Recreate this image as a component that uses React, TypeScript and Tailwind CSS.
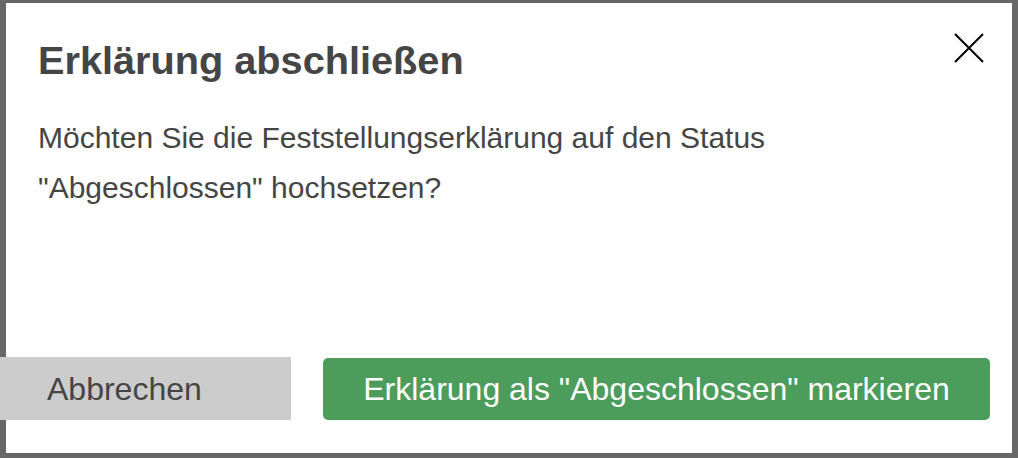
export default function App() {
  return (
    <div className="w-[1018px] h-[458px] bg-[#676767] pt-[3px] pl-[6px] pr-[6px] pb-[5px] overflow-hidden font-['Liberation_Sans',Arial,sans-serif]">
      <div className="bg-white h-full flex flex-col">
        <div className="flex items-start justify-between pl-[32px] pr-[28px] pt-[34px]">
          <h1 className="text-[39.7px] leading-[46px] font-bold text-[#454545]">
            Erklärung abschließen
          </h1>
          <button className="mt-[-4px] text-black">
            <svg width="30" height="30" viewBox="0 0 30 30" fill="none" stroke="currentColor" strokeWidth="2">
              <path d="M1 1L29 29M29 1L1 29" />
            </svg>
          </button>
        </div>
        <div className="pl-[32px] pt-[30px] text-[30px] leading-[50px] text-[#454545]">
          <p>Möchten Sie die Feststellungserklärung auf den Status</p>
          <p>"Abgeschlossen" hochsetzen?</p>
        </div>
        <div className="mt-auto flex items-center gap-[32px] pr-[22px] pb-[33px] ml-[-6px]">
          <button className="w-[291px] h-[63px] bg-[#cccccc] text-[#454545] text-[32px] text-left pl-[47px]">
            Abbrechen
          </button>
          <button className="flex-1 h-[62px] bg-[#4c9c5c] rounded-[5px] text-white text-[32px]">
            Erklärung als "Abgeschlossen" markieren
          </button>
        </div>
      </div>
    </div>
  );
}
